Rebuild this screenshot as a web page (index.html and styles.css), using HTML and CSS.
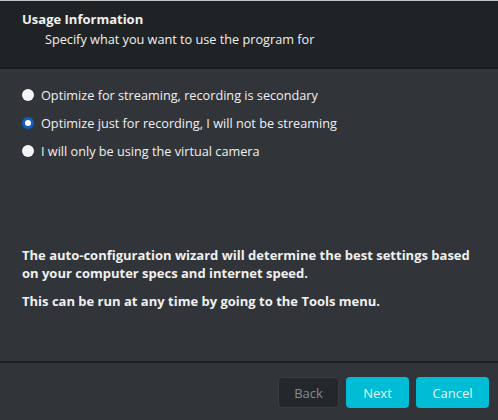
FILE: index.html
```html
<!DOCTYPE html>
<html>
<head>
<meta charset="utf-8">
<link rel="stylesheet" href="styles.css">
</head>
<body>
<div class="dialog">
  <div class="header">
    <div class="title">Usage Information</div>
    <div class="subtitle">Specify what you want to use the program for</div>
  </div>
  <div class="content">
    <div class="options">
      <label class="option"><span class="radio"></span>Optimize for streaming, recording is secondary</label>
      <label class="option"><span class="radio checked"></span>Optimize just for recording, I will not be streaming</label>
      <label class="option"><span class="radio"></span>I will only be using the virtual camera</label>
    </div>
    <div class="info">
      <p>The auto-configuration wizard will determine the best settings based on your computer specs and internet speed.</p>
      <p>This can be run at any time by going to the Tools menu.</p>
    </div>
  </div>
  <div class="footer">
    <button class="btn btn-back">Back</button>
    <button class="btn btn-primary btn-next">Next</button>
    <button class="btn btn-primary btn-cancel">Cancel</button>
  </div>
</div>
</body>
</html>
```

FILE: styles.css
```css
html, body {
  margin: 0;
  padding: 0;
  background: #31353a;
}
body {
  font-family: "Open Sans", "Noto Sans", sans-serif;
  font-size: 12.7px;
  color: #f0f0f0;
}
.dialog {
  width: 498px;
  height: 420px;
  display: flex;
  flex-direction: column;
  border-top: 1px solid #c2c3c9;
  box-sizing: border-box;
  background: #31353a;
}
.header {
  background: #202326;
  height: 68px;
  box-sizing: border-box;
  padding: 9px 22px 0;
  border-bottom: 2px solid #1b1d20;
}
.title {
  font-weight: 700;
  font-size: 13px;
  line-height: 19px;
}
.subtitle {
  padding-left: 23px;
  line-height: 20px;
}
.content {
  flex: 1;
  display: flex;
  flex-direction: column;
  padding: 17px 22px 0;
  border-bottom: 2px solid #1d1f23;
}
.options {
  display: flex;
  flex-direction: column;
  gap: 10px;
}
.option {
  display: flex;
  align-items: center;
  height: 18px;
  gap: 7px;
}
.radio {
  width: 12px;
  height: 12px;
  border-radius: 50%;
  background: #f3f3f3;
  box-sizing: border-box;
  flex: none;
}
.radio.checked {
  background: #ffffff;
  border: 3.5px solid #1060c0;
}
.info {
  margin-top: 86px;
  font-weight: 700;
  font-size: 13px;
  line-height: 18px;
}
.info p {
  margin: 0 0 10px;
}
.footer {
  height: 57px;
  display: flex;
  justify-content: flex-end;
  align-items: flex-start;
  padding: 14px 9px 0 0;
  gap: 7px;
  box-sizing: border-box;
}
.btn {
  font-family: inherit;
  font-size: 13px;
  height: 31px;
  border-radius: 4px;
  border: none;
  padding: 0;
}
.btn-back {
  width: 61px;
  background: #24272b;
  border: 1px solid #393c41;
  color: #868a8f;
}
.btn-primary {
  background: #00bcd4;
  color: #e8f6f9;
}
.btn-next {
  width: 63px;
}
.btn-cancel {
  width: 73px;
}
```
